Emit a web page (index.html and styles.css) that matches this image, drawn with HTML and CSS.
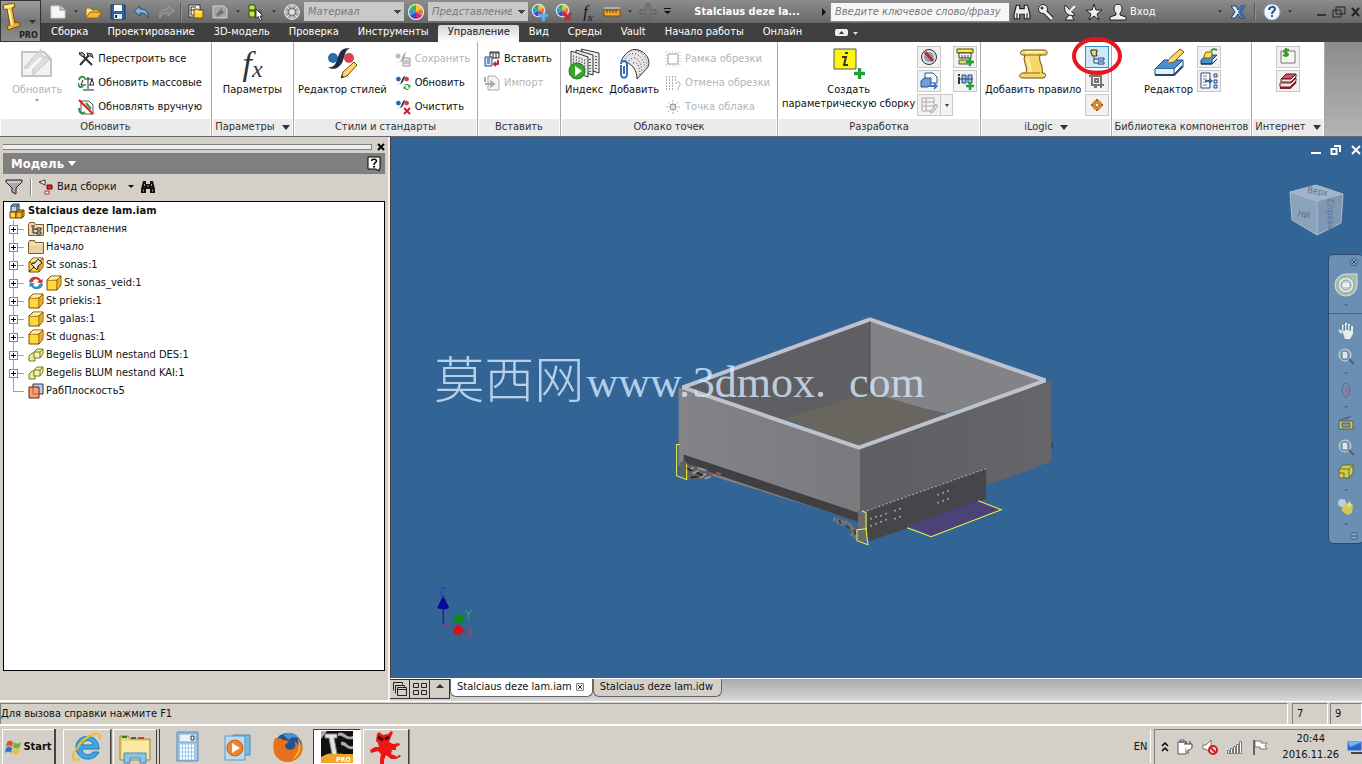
FILE: index.html
```html
<!DOCTYPE html>
<html lang="ru">
<head>
<meta charset="utf-8">
<title>Stalciaus deze lam.iam</title>
<link rel="stylesheet" href="styles.css">
</head>
<body>
<svg class="defs" width="0" height="0" aria-hidden="true">
  <defs>
    <linearGradient id="gold" x1="0" y1="0" x2="1" y2="1"><stop offset="0" stop-color="#ffe27a"/><stop offset="1" stop-color="#e09a1c"/></linearGradient>
    <linearGradient id="faceL" x1="0" y1="0" x2="1" y2="0"><stop offset="0" stop-color="#848388"/><stop offset="1" stop-color="#7a797e"/></linearGradient>
    <linearGradient id="faceR" x1="0" y1="0" x2="1" y2="0"><stop offset="0" stop-color="#5d5d62"/><stop offset="1" stop-color="#66656a"/></linearGradient>
    <symbol id="cube" viewBox="0 0 16 16"><path d="M1 5l4-4h10v9l-4 5H1z" fill="#ffd24a" stroke="#7a4a00"/><path d="M1 5h10v10M11 5l4-4" fill="none" stroke="#7a4a00"/><path d="M2 5l3.500-3.500h8.500L10.500 4.500z" fill="#fff0a8"/><path d="M2 6h8v8H2z" fill="#ffd83a"/><path d="M11.500 5.500L14.500 2.500v7L11.500 13.500z" fill="#f0a820"/></symbol>
    <symbol id="slide" viewBox="0 0 16 16"><path d="M1 9l3-3h3v8H1z" fill="#e4ec9a" stroke="#707a2a"/><path d="M6 5l3-3h6v5l-3 4H6z" fill="#f2f6a8" stroke="#707a2a"/><path d="M6 5h6v6M12 5l3-3" fill="none" stroke="#707a2a"/></symbol>
    <symbol id="folder" viewBox="0 0 16 16"><path d="M.5 3.500l1-2h5l1 2h8v11H.5z" fill="#ecd0a0" stroke="#7c5a34"/><path d="M1.500 5h13" stroke="#fff0d0"/></symbol>
    <symbol id="wheel" viewBox="0 0 18 18"><circle cx="9" cy="9" r="8" fill="#eee"/><path d="M9 9L9 2A7 7 0 0 1 15 5.500z" fill="#f6c62e"/><path d="M9 9L15 5.500A7 7 0 0 1 15 12.500z" fill="#ef7a24"/><path d="M9 9L15 12.500A7 7 0 0 1 9 16z" fill="#c62d8a"/><path d="M9 9L9 16A7 7 0 0 1 3 12.500z" fill="#4a3fc0"/><path d="M9 9L3 12.500A7 7 0 0 1 3 5.500z" fill="#2a9ae0"/><path d="M9 9L3 5.500A7 7 0 0 1 9 2z" fill="#3cb43c"/><circle cx="9" cy="9" r="7.500" fill="none" stroke="#ddd"/></symbol>
    <symbol id="styles" viewBox="0 0 16 16"><circle cx="3" cy="5" r="3" fill="#2a6aa8"/><circle cx="13" cy="5" r="3" fill="#d83a48"/><path d="M1 11c8 2 4-9 11-10-4 3 0 11-11 10z" fill="#223048"/></symbol>
    <symbol id="sync" viewBox="0 0 16 16"><path d="M2 6c2-5 9-5 11-1l2-2v6H9l2-2C10 4 6 3 2 6z" fill="#2a9a3a"/><path d="M14 10c-2 5-9 5-11 1l-2 2V7h6L5 9c1 3 5 4 9 1z" fill="#2a9a3a"/></symbol>
    <symbol id="mag" viewBox="0 0 18 18"><circle cx="8" cy="8" r="6" fill="#8fa9c0" stroke="#c4d4e0"/><path d="M5 4h4l2 2v6H5z" fill="#dde6ec" stroke="#5a7084"/><path d="M12 12l5 5" stroke="#4c6078" stroke-width="2"/></symbol>
    <symbol id="plus" viewBox="0 0 10 10"><path d="M3.500 0h3v3.500H10v3H6.500V10h-3V6.500H0v-3h3.500z" fill="#21a038"/></symbol>
    <symbol id="binoc" viewBox="0 0 16 16"><path d="M3 2h3v3h4V2h3l2 8v4h-5v-4H6v4H1v-4z" fill="currentColor"/><path d="M3.500 10.500v2M12.500 10.500v2M4.500 5v2M11.500 5v2M8 6v2" stroke="#999"/></symbol>
  </defs>
</svg>

<header class="top">
  <button class="app" aria-label="Меню приложения"><svg width="36" height="36" viewBox="0 0 36 36"><path d="M2 2l11-2 1 4-3 1 3 15 4-1 1 4-12 4-1-4 3-1L6 6 3 7z" fill="url(#gold)" stroke="#7a4d08"/><path d="M4 4l7-1M8 7l3 15" stroke="#fff1a8" stroke-width="2"/><path d="M28 17h7l-3.500 4z" fill="#333"/></svg><span>PRO</span></button>
  <div class="bars">
    <div class="title">
      <button class="tb" aria-label="Создать"><svg width="18" height="16" viewBox="0 0 18 16"><path d="M2 2h9l5 4v8H2z" fill="#f5f5f5" stroke="#ccc"/><path d="M11 2v4h5" fill="#ccc" stroke="#888"/></svg></button><i class="dd"></i>
      <button class="tb" aria-label="Открыть"><svg width="18" height="16" viewBox="0 0 18 16"><path d="M1 14V4h5l1 2h7v2" fill="#ffe48a" stroke="#8a6410"/><path d="M1 14l4-6h12l-4 6z" fill="#f7b733" stroke="#8a6410"/></svg></button>
      <button class="tb" aria-label="Сохранить"><svg width="16" height="16" viewBox="0 0 16 16"><path d="M1 1h14v14H1z" fill="#2d62a8" stroke="#17365f"/><path d="M4 1h8v6H4z" fill="#fff"/><path d="M4 10h8v5H4z" fill="#dfe6ee"/><path d="M5 11h2v3H5z" fill="#17365f"/></svg></button>
      <button class="tb" aria-label="Отменить"><svg width="18" height="16" viewBox="0 0 18 16"><path d="M1 7l6-5v3c6 0 9 3 8 9-1-4-4-5-8-5v3z" fill="#7fb0dc" stroke="#27507c"/></svg></button>
      <button class="tb" aria-label="Повторить"><svg width="18" height="16" viewBox="0 0 18 16"><path d="M17 7l-6-5v3c-6 0-9 3-8 9 1-4 4-5 8-5v3z" fill="#838383" stroke="#a2a2a2"/></svg></button>
      <i class="sep"></i>
      <button class="tb" aria-label="Браузер"><svg width="16" height="16" viewBox="0 0 16 16"><path d="M1 1h11v12H1z" fill="#fff" stroke="#334"/><path d="M3 3h5M3 3v8h3M3 6h4" fill="none" stroke="#222"/><path d="M6 5h4l1 1h4v8H6z" fill="#ffd23a" stroke="#6a4a00"/><path d="M7 8h7" stroke="#fff0a0"/></svg></button>
      <button class="tb" aria-label="Обновить"><svg width="18" height="16" viewBox="0 0 18 16"><path d="M2 2h11l3 3v9H2z" fill="#a5a5a5" stroke="#d0d0d0"/><path d="M4 12l7-8v3l3 1-8 5v-2z" fill="#707070"/></svg></button><i class="dd"></i>
      <button class="tb" aria-label="Выбор"><svg width="18" height="18" viewBox="0 0 18 18"><path d="M2 2h6v5H2zM2 8h6v6H2z" fill="#c8ea30" stroke="#33501a"/><path d="M9 8h5v6H9z" fill="#5bb030" stroke="#33501a"/><path d="M9 6l7 7h-3l2 4-2 .5-2-4-2 2z" fill="#fff" stroke="#234"/></svg></button><i class="dd"></i>
      <button class="tb" aria-label="Материалы"><svg width="18" height="18" viewBox="0 0 18 18"><circle cx="9" cy="9" r="7.500" fill="#aaa" stroke="#ddd"/><path d="M9 2v14M2 9h14M4 4l10 10M14 4L4 14" stroke="#eee"/><circle cx="9" cy="9" r="4" fill="none" stroke="#666"/></svg></button>
      <select class="combo" aria-label="Материал"><option>Материал</option></select>
      <button class="tb" aria-label="Цвет"><svg width="18" height="18"><use href="#wheel"/></svg></button>
      <select class="combo" aria-label="Представление"><option>Представление</option></select>
      <button class="tb" aria-label="Настроить вид"><svg width="18" height="18" viewBox="0 0 18 18"><use href="#wheel" width="15" height="15"/><path d="M7 11h10v2l-3 2v3h-3v-3l-4-2z" fill="#58b4ee"/></svg></button>
      <button class="tb" aria-label="Очистить вид"><svg width="18" height="18" viewBox="0 0 18 18"><use href="#wheel" width="15" height="15"/><path d="M8 10l8 7M16 10l-6 7" stroke="#b8323c" stroke-width="3"/></svg></button>
      <button class="tb fx" aria-label="Параметры"><i>f<sub>x</sub></i></button>
      <button class="tb" aria-label="Измерить"><svg width="18" height="16" viewBox="0 0 18 16"><path d="M1 6h16v6H1z" fill="#f3a92c" stroke="#7a5208"/><path d="M4 6v3M7 6v3M10 6v3M13 6v3" stroke="#5a3a00"/><path d="M1 4h16" stroke="#ddd"/></svg></button><i class="dd"></i>
      <button class="tb" aria-label="Добавить"><svg width="18" height="18" viewBox="0 0 18 18"><path d="M7 1h4v6h6v4h-6v6H7v-6H1V7h6z" fill="#767676" stroke="#606060"/></svg></button>
      <button class="tb narrow" aria-label="Настройка панели"><svg width="10" height="8" viewBox="0 0 10 8"><path d="M1 0h7v1H1zM1 3h7L4.500 6z" fill="#111"/></svg></button>
      <strong class="docname">Stalciaus deze la...</strong>
      <svg width="12" height="10" viewBox="0 0 12 10"><path d="M4 1v8l4-4z" fill="#111"/></svg>
      <input class="search" type="text" placeholder="Введите ключевое слово/фразу" aria-label="Поиск">
      <button class="tb" aria-label="Найти"><svg width="18" height="18" viewBox="0 0 16 16"><path d="M3 2h3v3h4V2h3l2 8v4h-5v-4H6v4H1v-4z" fill="#eee" stroke="#222"/><path d="M3.500 9v5M12.500 9v5" stroke="#222"/></svg></button>
      <button class="tb" aria-label="Ключ"><svg width="18" height="18" viewBox="0 0 18 18"><path d="M7 8l8 8" stroke="#222" stroke-width="5"/><circle cx="6" cy="6" r="4.500" fill="#eee" stroke="#222"/><path d="M7 8l8 8" stroke="#eee" stroke-width="3"/><circle cx="5" cy="5" r="1.500" fill="#333"/></svg></button>
      <button class="tb" aria-label="Связь"><svg width="18" height="18" viewBox="0 0 18 18"><path d="M4 2c-2 8 4 12 10 10zM8 12l-4 5h9l-2-4M9 8l5-6" fill="#eee" stroke="#222"/><path d="M9 8l5-5" stroke="#fff" stroke-width="2"/></svg></button>
      <button class="tb" aria-label="Избранное"><svg width="18" height="18" viewBox="0 0 18 18"><path d="M9 1l2 6h6l-5 4 2 6-5-4-5 4 2-6-5-4h6z" fill="#eee" stroke="#222"/></svg></button>
      <button class="tb" aria-label="Пользователь"><svg width="18" height="18" viewBox="0 0 18 18"><path d="M5 5c0-5 8-5 8 0 0 3-1 4-2 5v2l6 2v3H1v-3l6-2v-2C6 9 5 8 5 5z" fill="#eee" stroke="#222"/></svg></button>
      <span class="login">Вход</span>
      <span class="grow"></span><i class="dd"></i>
      <button class="tb" aria-label="Exchange"><svg width="18" height="16" viewBox="0 0 18 16"><path d="M2 2h5l2 4 3-4h4l-4 6 4 6h-5l-2-4-3 4H2l4-6z" fill="#dce8f6" stroke="#1c3a70"/><path d="M12 2h4l-4 6 4 6h-4L9 8z" fill="#3c6cb4"/></svg></button>
      <i class="sep wide"></i>
      <button class="tb" aria-label="Справка"><svg width="18" height="18" viewBox="0 0 18 18"><circle cx="9" cy="9" r="8" fill="#f4f8ff" stroke="#9ab"/><path d="M6 7c0-4 6-4 6-1 0 2-3 2-3 5" fill="none" stroke="#1b4fa0" stroke-width="2"/><path d="M8 12h2v2H8z" fill="#1b4fa0"/></svg></button><i class="dd"></i>
      <div class="win">
        <button aria-label="Свернуть"><svg width="12" height="12" viewBox="0 0 12 12"><path d="M1 8h9v2H1z" fill="#333"/></svg></button>
        <button aria-label="Восстановить"><svg width="14" height="12" viewBox="0 0 14 12"><path d="M4 1h9v7H4zM1 4h8v7H1z" fill="#777" stroke="#222"/></svg></button>
        <button aria-label="Закрыть"><svg width="12" height="12" viewBox="0 0 12 12"><path d="M2 2l7 8M9 2l-7 8" stroke="#222" stroke-width="2"/></svg></button>
      </div>
    </div>
    <nav class="tabs">
      <a href="#">Сборка</a><a href="#">Проектирование</a><a href="#">3D-модель</a><a href="#">Проверка</a><a href="#">Инструменты</a><a href="#" class="on">Управление</a><a href="#">Вид</a><a href="#">Среды</a><a href="#">Vault</a><a href="#">Начало работы</a><a href="#">Онлайн</a>
      <button class="fold" aria-label="Свернуть ленту"><svg width="24" height="10" viewBox="0 0 24 10"><rect y="1" width="13" height="7" rx="2" fill="#eee"/><path d="M4 6l2.500-3L9 6z" fill="#333"/><path d="M18 4h5l-2.500 3z" fill="#ddd"/></svg></button>
    </nav>
  </div>
</header>

<section class="ribbon">
  <div class="panel p-upd">
    <div class="body">
      <button class="big off"><svg width="32" height="32" viewBox="0 0 32 32"><path d="M1 4h22l7 7v17H1z" fill="#f2f2f2" stroke="#c4c4c4" stroke-width="2"/><path d="M3 20L20 1v6l9 4L12 27v-7z" fill="#dedede" stroke="#c4c4c4"/><path d="M6 24L20 10" stroke="#f8f8f8" stroke-width="3"/></svg><span>Обновить</span><i class="dd"></i></button>
      <div class="col">
        <button class="row"><svg width="16" height="16" viewBox="0 0 16 16"><path d="M2 14L11 4M14 14L5 5" stroke="#333" stroke-width="2"/><path d="M1 3l3-2 3 3-2 2zM9 2l5 1 1 4-2-2-3 0zM1 1l2 2" fill="#999" stroke="#333"/></svg>Перестроить все</button>
        <button class="row"><svg width="16" height="16" viewBox="0 0 16 16"><path d="M10 2v12M5 15h11M6 4h9M3 10h5M11 10h5M5 5l-2 5M14 4l-2 6M14 4l2 6" stroke="#223" fill="none"/><path d="M1 5c1-4 4-4 6-2M0 8c0 4 3 5 5 3" fill="none" stroke="#2a9a3a" stroke-width="2"/></svg>Обновить массовые</button>
        <button class="row"><svg width="16" height="16" viewBox="0 0 16 16"><path d="M3 2h8l4 4v9H3z" fill="#fff" stroke="#555"/><path d="M8 4l5 6M1 9c0 5 3 6 6 4" fill="none" stroke="#2a9a3a" stroke-width="2"/><path d="M1 1l14 14" stroke="#d02030" stroke-width="2"/></svg>Обновлять вручную</button>
      </div>
    </div>
    <h2>Обновить</h2>
  </div>
  <div class="panel p-par">
    <div class="body center">
      <button class="big"><span class="bigfx"><i>f<sub>x</sub></i></span><span>Параметры</span></button>
    </div>
    <h2>Параметры <i class="tri"></i></h2>
  </div>
  <div class="panel p-sty">
    <div class="body">
      <button class="big"><svg width="32" height="32" viewBox="0 0 32 32"><circle cx="7" cy="10" r="5" fill="#2b6da8"/><circle cx="23" cy="10" r="5" fill="#dc4450"/><path d="M2 19c7 1 8-4 10-10 2-6 4-9 12-9-6 3-5 9-8 15-3 5-9 8-14 4z" fill="#1e2c44"/><path d="M15 30l2-6L28 14l3 3L21 28z" fill="#ffd868" stroke="#6a4a10"/><path d="M15 30l1-3 2 2z" fill="#333"/></svg><span>Редактор стилей</span></button>
      <div class="col">
        <button class="row off"><svg width="16" height="16" viewBox="0 0 16 16"><circle cx="3" cy="5" r="2.500" fill="#bbb"/><path d="M1 11c8 2 4-9 11-10-4 3 0 11-11 10z" fill="#aaa"/><path d="M8 7h7v8H8zM9 10h5M9 12h5" fill="#eee" stroke="#999"/></svg>Сохранить</button>
        <button class="row"><svg width="16" height="16" viewBox="0 0 16 16"><use href="#styles" width="15" height="13"/><use href="#sync" x="8" y="8" width="8" height="8"/></svg>Обновить</button>
        <button class="row"><svg width="16" height="16" viewBox="0 0 16 16"><use href="#styles" width="15" height="13"/><path d="M9 9l6 6M15 9l-6 6" stroke="#d01c2c" stroke-width="2"/></svg>Очистить</button>
      </div>
    </div>
    <h2>Стили и стандарты</h2>
  </div>
  <div class="panel p-ins">
    <div class="body">
      <div class="col">
        <button class="row"><svg width="16" height="16" viewBox="0 0 16 16"><path d="M6 1h9v6H6z" fill="#fff" stroke="#222"/><path d="M6 2h9M9 3v4M12 3v4" stroke="#222"/><path d="M1 6h7v9H1z" fill="#d4e6fa" stroke="#1f4a80"/><path d="M3 8h3M3 10h3M3 12h3" stroke="#1f4a80"/><path d="M14 9v4h-4M12 11l-2 2 2 2" fill="none" stroke="#c02838" stroke-width="2"/></svg>Вставить</button>
        <button class="row off"><svg width="16" height="16" viewBox="0 0 16 16"><path d="M4 1h7l4 4v10H4z" fill="#f4f4f4" stroke="#aaa"/><path d="M1 9h8M6 6l4 3-4 3M1 2v5" fill="none" stroke="#aaa" stroke-width="2"/></svg>Импорт</button>
      </div>
    </div>
    <h2>Вставить</h2>
  </div>
  <div class="panel p-cld">
    <div class="body">
      <button class="big"><svg width="32" height="32" viewBox="0 0 32 32"><g fill="#ececec" stroke="#333"><path d="M13 1l18 4v20l-6-2z"/><path d="M8 2l17 5v20L8 22z"/><path d="M3 3l17 6v20L3 23z"/></g><path d="M5 8l14 5M5 11l14 5M5 14l14 5M5 17l14 5M22 11v13M28 8v13" stroke="#555" stroke-dasharray="1 2" stroke-width="2"/><circle cx="9" cy="23" r="8" fill="#3aa62a" stroke="#1e7a18"/><path d="M7 18v10l7-5z" fill="#fff"/></svg><span>Индекс</span></button>
      <button class="big"><svg width="32" height="32" viewBox="0 0 32 32"><path d="M3 13C8 3 15-1 23 3c8 4 9 12 7 16L19 31c0-9-5-17-16-18z" fill="#e6e6e6" stroke="#333"/><path d="M7 11C12 2 25 4 27 20M11 13C17 5 24 14 24 24M15 15c5-2 7 6 7 12M17 2c8 2 12 8 12 16" fill="none" stroke="#444" stroke-dasharray="1 2"/><path d="M3 17v9c0 5 6 5 6 0V16c0-4-6-4-6 0M6 18v8" fill="none" stroke="#3b72b0" stroke-width="2"/></svg><span>Добавить</span></button>
      <div class="col">
        <button class="row off"><svg width="16" height="16" viewBox="0 0 16 16"><path d="M3 3h10v10H3z" fill="none" stroke="#999"/><path d="M1 1h14M1 15h14M1 1v14M15 1v14" stroke="#bbb" stroke-dasharray="1 2"/></svg>Рамка обрезки</button>
        <button class="row off"><svg width="16" height="16" viewBox="0 0 16 16"><path d="M1 2h11M1 5h11M1 8h9M1 11h9M1 14h9" stroke="#aaa" stroke-dasharray="1 2" stroke-width="2"/><path d="M11 9c0-3 4-3 4 0s-2 2-2 6" fill="none" stroke="#aaa"/></svg>Отмена обрезки</button>
        <button class="row off"><svg width="16" height="16" viewBox="0 0 16 16"><path d="M8 1v14M1 8h14M3 3l10 10M13 3L3 13" stroke="#aaa" stroke-dasharray="2 1"/><circle cx="8" cy="8" r="3" fill="#ddd" stroke="#999"/></svg>Точка облака</button>
      </div>
    </div>
    <h2>Облако точек</h2>
  </div>
  <div class="panel p-dev">
    <div class="body">
      <button class="big"><svg width="32" height="32" viewBox="0 0 32 32"><path d="M1 1h22v20H1z" fill="#fff312" stroke="#555"/><path d="M12 4h3v2h-3z" fill="#333"/><path d="M9 9h4l-2 8h4" fill="none" stroke="#333" stroke-width="2"/><use href="#plus" x="21" y="20" width="11" height="11"/></svg><span>Создать</span><span>параметрическую сборку</span></button>
      <div class="boxes">
        <button class="box" aria-label="Анализ"><svg width="18" height="18" viewBox="0 0 18 18"><circle cx="9" cy="9" r="7.500" fill="#dde3ea" stroke="#333"/><circle cx="9" cy="9" r="5" fill="#90a0b0"/><path d="M5 4l8 9" stroke="#b43022" stroke-width="3"/></svg></button>
        <button class="box" aria-label="Компонент iPart"><svg width="18" height="18" viewBox="0 0 18 18"><path d="M5 1h8l4 4v6H5z" fill="#fff" stroke="#2c5590"/><path d="M1 9l3-3h7v6l-3 3H1z" fill="#6f9fd8" stroke="#2c5590"/><path d="M9 13h5v-3l4 4-4 4v-3H9z" fill="#3b78c4"/></svg></button>
        <div class="split"><button class="box" aria-label="Таблица" disabled><svg width="18" height="18" viewBox="0 0 18 18"><path d="M2 2h12v13H2zM2 6h12M2 10h12M6 2v13" fill="#f4f4f4" stroke="#aaa"/><path d="M10 16l6-8 2 2-6 7z" fill="#ddd" stroke="#aaa"/></svg></button><button class="box slim" aria-label="Ещё"><i class="dd"></i></button></div>
      </div>
      <div class="boxes">
        <button class="box" aria-label="Штамп"><svg width="18" height="18" viewBox="0 0 18 18"><path d="M1 1h16v4H1z" fill="#ffe93a" stroke="#4a4a10"/><path d="M3 5h12v5H3z" fill="#fff" stroke="#333"/><path d="M6 7v3M9 7v3M12 7v3" stroke="#333"/><path d="M3 12h12v4H3z" fill="#d8e060" stroke="#555"/><use href="#plus" x="10" y="10" width="8" height="8"/></svg></button>
        <button class="box" aria-label="iMate"><svg width="18" height="18" viewBox="0 0 18 18"><path d="M2 2h2v2H2zM2 5h2v7H2z" fill="#333"/><path d="M6 3h4v8H6zM12 3h4v8h-4zM4 7h13" fill="#9cc0ec" stroke="#24487c"/><use href="#plus" x="10" y="10" width="8" height="8"/></svg></button>
      </div>
    </div>
    <h2>Разработка</h2>
  </div>
  <div class="panel p-log">
    <div class="body">
      <button class="big"><svg width="32" height="32" viewBox="0 0 32 32"><path d="M7 2h20c4 0 4 5 1 5h-5c-2 7 4 11 2 18h1c4 0 3 5 0 5H6c-5 0-4-5 0-5h3c2-7-4-12-1-18H6C2 7 3 2 7 2z" fill="#f7d768" stroke="#6b4c0c"/><path d="M8 7h16M9 25h14" stroke="#8c6818"/><path d="M8 4h18" stroke="#fff0a8" stroke-width="2"/><path d="M11 9c-1 5 3 9 2 15" stroke="#fff0a0" stroke-width="3" fill="none"/></svg><span>Добавить правило</span></button>
      <div class="boxes ring-host">
        <button class="box active" aria-label="Обозреватель правил"><svg width="18" height="18" viewBox="0 0 18 18"><path d="M3 2h6v2l-1 1 1 3H4V6L3 5z" fill="#f7d860" stroke="#222"/><path d="M6 9v6h3M6 11h3M10 10h6v2h-6zM10 14h6v2h-6z" fill="#fff" stroke="#1c3c78"/></svg></button>
        <button class="box" aria-label="Триггеры"><svg width="18" height="18" viewBox="0 0 18 18"><path d="M4 1v12h12M1 4h12v12M7 7h3v3H7zM6 15h3" fill="none" stroke="#777" stroke-width="2"/></svg></button>
        <button class="box" aria-label="Параметры iLogic"><svg width="18" height="18" viewBox="0 0 18 18"><path d="M9 3v12M3 9h12" stroke="#a85a10" stroke-width="2"/><circle cx="9" cy="9" r="4.500" fill="#f09a2c" stroke="#a85a10"/><circle cx="9" cy="9" r="2" fill="#fff" stroke="#a85a10"/></svg></button>
        <svg class="ring" width="52" height="40" viewBox="0 0 52 40"><ellipse cx="26" cy="20" rx="23" ry="17" fill="none" stroke="#e8141e" stroke-width="4"/></svg>
      </div>
    </div>
    <h2>iLogic <i class="tri"></i></h2>
  </div>
  <div class="panel p-lib">
    <div class="body">
      <button class="big"><svg width="32" height="32" viewBox="0 0 32 32"><path d="M2 21l9-9h19l-9 9z" fill="#4a8fd0" stroke="#1c4a7c"/><path d="M2 21v6h19v-6M21 27l9-9v-6" fill="#e9eff4" stroke="#1c4a7c"/><path d="M2 27h19l9-9" fill="none" stroke="#1c4a7c" stroke-width="2"/><path d="M15 15l2-5L27 1l4 3-10 10z" fill="#ffd45a" stroke="#7a5410"/><path d="M15 15l2-5 3 3z" fill="#f4e0c0"/></svg><span>Редактор</span></button>
      <div class="boxes">
        <button class="box" aria-label="Обновить библиотеку"><svg width="18" height="18" viewBox="0 0 18 18"><path d="M1 12l5-5h11l-5 5v4H1z" fill="#4a8fd0" stroke="#1c4a7c"/><path d="M4 8l2-4h6v4l-2 2H4z" fill="#ffe23a" stroke="#7a5c00"/><path d="M11 3c2-3 4-2 6-1" stroke="#2a9a3a" fill="none" stroke-width="2"/><path d="M1 16h11l5-5" stroke="#222" fill="none"/></svg></button>
        <button class="box" aria-label="Пакетная публикация"><svg width="18" height="18" viewBox="0 0 18 18"><path d="M1 1h9v15H1z" fill="#fff" stroke="#244a80"/><path d="M3 4h4M3 7h4M3 10h4M3 13h4" stroke="#777"/><path d="M5 8h4V6l4 3-4 3v-2H5z" fill="#2a68b0"/><path d="M14 2h3v3h-3zM14 8h3v3h-3zM14 13h3v3h-3z" fill="#cfe0f4" stroke="#244a80"/></svg></button>
      </div>
    </div>
    <h2>Библиотека компонентов</h2>
  </div>
  <div class="panel p-web">
    <div class="body center">
      <div class="boxes">
        <button class="box" aria-label="Поставщики"><svg width="18" height="18" viewBox="0 0 18 18"><path d="M2 3h14v12H2z" fill="#f6f8f0" stroke="#777"/><path d="M10 2c-5-2-6 3-3 3s3 4-3 2M7 0v9" fill="none" stroke="#3c9a20" stroke-width="2"/></svg></button>
        <button class="box" aria-label="Каталог"><svg width="18" height="18" viewBox="0 0 18 18"><path d="M2 7l5-5h10l-5 5z" fill="#d8505c" stroke="#5c1620"/><path d="M2 7v3h10l5-5V2l-5 5z" fill="#f2e8dc" stroke="#5c1620"/><path d="M1 11v4h10l6-6V6l-5 5z" fill="#f2e8dc" stroke="#6c2430"/><path d="M1 16h10l6-6" fill="none" stroke="#8c1c2c" stroke-width="2"/></svg></button>
      </div>
    </div>
    <h2>Интернет <i class="tri"></i></h2>
  </div>
</section>

<main class="work">
  <aside class="browser">
    <div class="grip"><i></i><button aria-label="Закрыть панель"><svg width="8" height="8" viewBox="0 0 8 8"><path d="M1 1l6 6M7 1L1 7" stroke="#000" stroke-width="2"/></svg></button></div>
    <div class="caption"><span>Модель</span><i class="tri white"></i><button class="help" aria-label="Справка"><svg width="14" height="16" viewBox="0 0 14 16"><path d="M1 1h12v12h-1v2l-3-2H1z" fill="#fff" stroke="#000"/><path d="M4.500 5c0-2.500 5-2.500 5 0 0 1.500-2.500 1.500-2.500 4" fill="none" stroke="#000" stroke-width="1.500"/><path d="M6 10h2v1.500H6z"/></svg></button></div>
    <div class="tools">
      <button aria-label="Фильтр"><svg width="18" height="16" viewBox="0 0 18 16"><path d="M1 1h16v2l-6 6v6l-4-2V9L1 3z" fill="#aaa" stroke="#222"/><path d="M2 3h14" stroke="#eee"/></svg></button>
      <i class="vsep"></i>
      <button class="view"><svg width="16" height="16" viewBox="0 0 16 16"><path d="M1 3l6-2v5z" fill="#fff" stroke="#333"/><path d="M9 6h5v4H9z" fill="#d8303c" stroke="#600"/><path d="M7 12h4v3H7z" fill="#fff" stroke="#c02030"/></svg>Вид сборки <i class="arrow"></i></button>
      <button aria-label="Найти"><svg width="16" height="16"><use href="#binoc"/></svg></button>
    </div>
    <ul class="tree">
      <li class="root"><svg width="16" height="16" viewBox="0 0 16 16"><path d="M2 3l2-2h6v6l-2 2H2z" fill="#b8d4f0" stroke="#1c2c44"/><path d="M2 3h6v6M8 3l2-2" fill="none" stroke="#1c2c44"/><path d="M1 9h6v6H1z" fill="#ffd840" stroke="#5a3a00"/><path d="M7 9l2-2h6v6l-2 2H7z" fill="#f7b828" stroke="#5a3a00"/><path d="M7 9h6v6M13 9l2-2" fill="none" stroke="#5a3a00"/></svg>Stalciaus deze lam.iam</li>
      <li><b></b><svg width="16" height="16" viewBox="0 0 16 16"><use href="#folder"/><path d="M5 5v7h4M5 8h4M3 5h4" fill="none" stroke="#222"/><path d="M9 7h4v2H9zM9 11h4v2H9z" fill="#fff" stroke="#222"/></svg>Представления</li>
      <li><b></b><svg width="16" height="16"><use href="#folder"/></svg>Начало</li>
      <li><b></b><svg width="16" height="16" viewBox="0 0 16 16"><use href="#cube"/><path d="M1 15l5-5-3-3 4-1 3-4 4 4-4 3-1 4-3-3" fill="#e8e8e8" stroke="#222"/></svg>St sonas:1</li>
      <li><b></b><svg width="16" height="16" viewBox="0 0 16 16"><path d="M1 7c1-6 9-7 12-2l2-1-1 5-5-2 2-1C9 3 5 4 5 7z" fill="#d4303c"/><path d="M15 9c-1 6-9 7-12 2l-2 1 1-5 5 2-2 1c2 3 6 2 6-1z" fill="#2f8fb8"/></svg><svg width="16" height="16"><use href="#cube"/></svg>St sonas_veid:1</li>
      <li><b></b><svg width="16" height="16"><use href="#cube"/></svg>St priekis:1</li>
      <li><b></b><svg width="16" height="16"><use href="#cube"/></svg>St galas:1</li>
      <li><b></b><svg width="16" height="16"><use href="#cube"/></svg>St dugnas:1</li>
      <li><b></b><svg width="16" height="16"><use href="#slide"/></svg>Begelis BLUM nestand DES:1</li>
      <li><b></b><svg width="16" height="16"><use href="#slide"/></svg>Begelis BLUM nestand KAI:1</li>
      <li class="last"><svg width="16" height="16" viewBox="0 0 16 16"><path d="M5 1h10v10H5z" fill="#b8d0f0" stroke="#333"/><path d="M1 4h10v11H1z" fill="#f4a070" stroke="#5a2410"/><path d="M5 4v7h6" fill="none" stroke="#c85030"/></svg>РабПлоскость5</li>
    </ul>
  </aside>

  <section class="stage">
    <div class="view3d">
      <svg class="scene" viewBox="390 138 971 540" preserveAspectRatio="xMidYMid slice">
        <path d="M685 390L869 322V410L784 420 800 432z" fill="#5f5e63"/>
        <path d="M869 322L1043 381 945 414 869 397z" fill="#838287"/>
        <path d="M783 419l86-26 75 22-86 33z" fill="#69655f"/>
        <path d="M678 388L859 450V522L678 466z" fill="url(#faceL)"/>
        <path d="M859 450L1050 381V462L985 486 859 515z" fill="url(#faceR)"/>
        <path d="M683 455l174 58v9L683 464z" fill="#403f42"/>
        <path d="M682 388L869 320l175 61-186 67z" fill="none" stroke="#bfc2ca" stroke-width="4" stroke-linejoin="bevel"/>
        <path d="M869 322v71" stroke="#4e4d52"/>
        <path d="M866 511L985 469v30l-62 24-57 19z" fill="#46464a"/>
        <path d="M866 511L985 469" stroke="#b0b0b4" stroke-dasharray="2 2"/>
        <path d="M906 526l71-25 23 9-70 26z" fill="#4b4378"/>
        <path d="M977 501l23 9-70 27-24-9" fill="none" stroke="#f4f43c"/>
        <path d="M857 511h9v31h-9z" fill="#6b6a6c"/>
        <path d="M679 463l6-2 3 4 5 1 6 2 8 2 3 6-10 4-8-1-7 2-5-4z" fill="#606064"/>
        <path d="M688 470l5-2M692 474l6-3M700 478l5-4M697 468l8 3M704 479l6-2" stroke="#999" stroke-width="2"/>
        <path d="M685 468l6 3M696 473l6 3M690 478l7-1" stroke="#222" stroke-width="2"/>
        <path d="M708 474l4 1M715 474l5 1" stroke="#7a5f58" stroke-width="4"/>
        <path d="M832 519l14 4 6 6M836 522l8 3M848 527l9 6M850 534l6 4" stroke="#77757a" stroke-width="4" stroke-dasharray="3 1" fill="none"/>
        <path d="M838 520l2 4M846 526l3 3M853 530l2 5" stroke="#4b3a35" stroke-width="2"/>
        <path d="M679 445h-3v31l10 4v-15" fill="none" stroke="#f4f43c"/>
        <path d="M861 511l4 2v16l2 16-11-4v-11l10-1" fill="none" stroke="#f4f43c"/>
        <g fill="#a4a4a8"><circle cx="870" cy="519" r="1"/><circle cx="875" cy="517" r="1"/><circle cx="880" cy="516" r="1"/><circle cx="885" cy="514" r="1"/><circle cx="870" cy="526" r="1"/><circle cx="875" cy="524" r="1"/><circle cx="880" cy="522" r="1"/><circle cx="885" cy="520" r="1"/><circle cx="894" cy="511" r="1"/><circle cx="899" cy="509" r="1"/><circle cx="894" cy="519" r="1"/><circle cx="899" cy="517" r="1"/><circle cx="937" cy="495" r="1"/><circle cx="942" cy="493" r="1"/><circle cx="947" cy="491" r="1"/><circle cx="937" cy="503" r="1"/><circle cx="942" cy="501" r="1"/><circle cx="947" cy="499" r="1"/></g>
        <path d="M1051 443v6" stroke="#333"/>
        <text class="mark" x="434" y="399">莫西网</text>
        <text class="mark-lat" x="586" y="398">www.</text><text class="mark-lat" x="692" y="398">3dmox.</text><text class="mark-lat" x="848" y="398">com</text>
        <path d="M443 606v18" stroke="#101080"/><path d="M443 624l12 4" stroke="#a03050"/>
        <path d="M443 596l6 12c-3 2-9 2-12 0z" fill="#0a0a98"/>
        <path d="M453 617l6-3 5 2v5l-6 3-4-3z" fill="#0c8c14"/>
        <path d="M459 624l5 7-5 4-6-1 1-6z" fill="#d41018"/>
        <text class="axis" x="438" y="596" fill="#2040e0">Z</text><text class="axis" x="465" y="619" fill="#20b070">Y</text><text class="axis" x="465" y="637" fill="#a83c5c">X</text>
      </svg>
      <div class="docwin">
        <button aria-label="Свернуть"><svg width="12" height="12" viewBox="0 0 12 12"><path d="M1 8h10v2H1z" fill="#fff"/></svg></button>
        <button aria-label="Восстановить"><svg width="12" height="12" viewBox="0 0 12 12"><path d="M4 2h6v6M1.500 5h5v5h-5z" fill="none" stroke="#fff" stroke-width="2"/></svg></button>
        <button aria-label="Закрыть"><svg width="12" height="12" viewBox="0 0 12 12"><path d="M2 2l8 8M10 2l-8 8" stroke="#fff" stroke-width="2"/></svg></button>
      </div>
      <svg class="viewcube" width="56" height="56" viewBox="0 0 56 56"><path d="M1 10L27 3l27 9-26 7z" fill="#a3b4c8"/><path d="M1 10l27 9v34L3 38z" fill="#8ba2bb"/><path d="M28 19l26-7-2 29-24 12z" fill="#7e98b4"/><path d="M1 10L27 3l27 9-2 29-24 12L3 38zM1 10l27 9 26-7M28 19v34" fill="none" stroke="#a9bbce"/><text class="cube-t" transform="translate(8 34) rotate(14)">НИ</text><text class="cube-t" transform="translate(38 17) rotate(88)">Справа</text><text class="cube-t" transform="translate(18 11) rotate(8)">Верх</text></svg>
      <div class="navbar">
        <button aria-label="Закрыть"><svg width="8" height="8" viewBox="0 0 8 8"><circle cx="4" cy="4" r="3.500" fill="#8fa9c0" stroke="#3c5a78"/><path d="M2 2l4 4M6 2L2 6" stroke="#2c4058"/></svg></button>
        <button class="n" aria-label="Штурвал"><svg width="24" height="24" viewBox="0 0 24 24"><path d="M12 1h11v11a11 11 0 1 1-11-11z" fill="#a9bcae" stroke="#d5e0e6"/><circle cx="12" cy="12" r="8" fill="#dfe8e4" stroke="#8ab08a"/><circle cx="12" cy="12" r="5" fill="#c4d0d8" stroke="#8ba0ac"/><path d="M9 10h6v4H9z" fill="#eef2f4"/></svg></button><i class="dd"></i>
        <hr>
        <button class="n" aria-label="Панорама"><svg width="18" height="18" viewBox="0 0 18 18"><path d="M6 9V3M9 8V1M12 8V2M15 9V4M5 11L2 8" stroke="#e6edf2" stroke-width="2"/><path d="M5 8h11v4l-3 5H8z" fill="#e6edf2"/><path d="M7 4v5M10 3v5M13 4v5" stroke="#536a80"/></svg></button>
        <button class="n" aria-label="Зумирование"><svg width="18" height="18"><use href="#mag"/></svg></button><i class="dd"></i>
        <button class="n" aria-label="Орбита"><svg width="18" height="18" viewBox="0 0 18 18"><ellipse cx="9" cy="9" rx="7" ry="3" fill="none" stroke="#8d84ac"/><ellipse cx="9" cy="9" rx="4" ry="7" fill="none" stroke="#4f6c8c"/><path d="M8 6l5 3-5 4z" fill="#a8688c"/></svg></button><i class="dd"></i>
        <button class="n" aria-label="Вид на грань"><svg width="18" height="16" viewBox="0 0 18 16"><path d="M2 6h14v8H2z" fill="#c8cc6c" stroke="#4e5d50"/><path d="M5 8h8v4H5z" fill="#8498a4" stroke="#4e5d50"/><path d="M3 5l9-3M9 4l5-3" stroke="#44586a"/></svg></button>
        <button class="n" aria-label="Предыдущий вид"><svg width="18" height="18"><use href="#mag"/></svg></button>
        <button class="n" aria-label="Стиль"><svg width="18" height="18" viewBox="0 0 18 18"><path d="M2 6l4-4h10v8l-4 5H2z" fill="#d2cc50" stroke="#5e6a3c"/><path d="M2 6h10v9M12 6l4-4M2 10h5v5" fill="none" stroke="#5e6a3c"/></svg></button><i class="dd"></i>
        <button class="n" aria-label="Сечение"><svg width="18" height="18" viewBox="0 0 18 18"><path d="M5 8l5-3 6 2-1 8-5 2-5-4z" fill="#d0c950"/><circle cx="5" cy="5" r="4" fill="#b8cfe0"/><path d="M12 3l3 4-5 3z" fill="#e6e080"/></svg></button><i class="dd"></i>
        <button aria-label="Настройка"><svg width="8" height="8" viewBox="0 0 8 8"><circle cx="4" cy="4" r="3.500" fill="#8fa9c0" stroke="#3c5a78"/><path d="M2 4h4" stroke="#2c4058"/></svg></button>
      </div>
    </div>
    <div class="docs">
      <button class="tile" aria-label="Каскадом"><svg width="16" height="16" viewBox="0 0 16 16"><path d="M1.500 9.500v-8h9v2M3.500 12.500v-8h9v2M5.500 6.500h9v8h-9zM5.500 8.500h9" fill="none" stroke="#222"/></svg></button>
      <button class="tile" aria-label="Мозаикой"><svg width="16" height="16" viewBox="0 0 16 16"><path d="M1.500 2.500h5v4h-5zM9.500 2.500h5v4h-5zM1.500 9.500h5v4h-5zM9.500 9.500h5v4h-5z" fill="none" stroke="#222"/></svg></button>
      <button class="tile up" aria-label="Список"><svg width="16" height="16" viewBox="0 0 16 16"><path d="M4 7l4-4 4 4z" fill="#333"/></svg></button>
      <a href="#" class="doc on">Stalciaus deze lam.iam<svg width="8" height="8" viewBox="0 0 8 8"><path d="M.5.5h7v7h-7z" fill="#eee" stroke="#888"/><path d="M2 2l4 4M6 2L2 6" stroke="#333"/></svg></a>
      <a href="#" class="doc">Stalciaus deze lam.idw</a>
    </div>
  </section>
</main>

<div class="status"><span class="msg">Для вызова справки нажмите F1</span><span class="num">7</span><span class="num">9</span></div>

<footer class="taskbar">
  <button class="start"><svg width="18" height="18" viewBox="0 0 18 18"><path d="M2 4c2-2 4-2 6 0L7 9C5 7 3 7 1 9z" fill="#e4502c"/><path d="M9 4c2 2 4 2 7 0l-1 5c-3 2-5 2-7 0z" fill="#6db33c"/><path d="M1 10c2-2 4-2 6 0l-1 5c-2-2-4-2-6 0z" fill="#2f74c8"/><path d="M8 10c2 2 4 2 7 0l-1 5c-3 2-5 2-7 0z" fill="#f4c02c"/></svg>Start</button>
  <button class="task framed ie" aria-label="Internet Explorer"><svg width="34" height="34" viewBox="0 0 34 34"><path d="M29 19H12c0 6 8 8 11 3h6C24 33 6 31 6 17 6 3 29 2 29 19zM12 15h11c0-6-10-6-11 0z" fill="#3fa8e4" stroke="#1878b8"/><path d="M30 9c2-10-14-5-23 9-6 8-6 14 3 11" fill="none" stroke="#f2bd2c" stroke-width="2"/></svg></button>
  <button class="task framed stack" aria-label="Проводник"><svg width="34" height="34" viewBox="0 0 34 34"><path d="M2 6h8l2 3h20v21H2z" fill="#f0d478" stroke="#a8842c"/><path d="M4 11h27v18H4z" fill="#fae9a4"/><path d="M4 7h5M13 8h5" stroke="#2a7a3a" stroke-width="2"/><path d="M20 8h6" stroke="#c84030" stroke-width="2"/><path d="M6 33V23h22v10h-6v-5H12v5z" fill="#8cc4e8" stroke="#4a88b4"/></svg></button>
  <button class="task" aria-label="Калькулятор"><svg width="34" height="34" viewBox="0 0 34 34"><path d="M6 2h21v29H6z" fill="#9cc8ec" stroke="#5888b4"/><path d="M8 4h17v8H8z" fill="#e8f2fa" stroke="#7aa4c8"/><path d="M20 6h3v4h-3z" fill="none" stroke="#334"/><path d="M9 16h15M9 20h15M9 24h15M9 28h15" stroke="#fff" stroke-width="3" stroke-dasharray="2 1"/></svg></button>
  <button class="task" aria-label="Проигрыватель"><svg width="34" height="34" viewBox="0 0 34 34"><path d="M12 5h17v20H12z" fill="#7db8e0" stroke="#4a88b4"/><path d="M4 6h20v24H4z" fill="#b8dcf4" stroke="#5a98c4"/><circle cx="14" cy="18" r="8" fill="#f0822c" stroke="#c85c10"/><path d="M11 13v10l8-5z" fill="#fff"/></svg></button>
  <button class="task" aria-label="Firefox"><svg width="34" height="34" viewBox="0 0 34 34"><circle cx="17" cy="17" r="14" fill="#25528f"/><path d="M12 5c6-4 13-2 15 3-5-2-8 0-9 2z" fill="#4a90d0"/><path d="M4 8c2 1 3 1 5 0l3 2 6 1-4 4c0 4 4 6 8 4 3-2 3-5 1-8 4 2 6 6 3 10 4-3 5-9 3-13 6 9 2 23-11 24C5 33-1 20 4 8z" fill="#e8701c"/><path d="M27 8c6 9 1 19-6 22 5-5 8-12 6-22z" fill="#f8b42c"/></svg></button>
  <button class="task current" aria-label="Autodesk Inventor"><svg width="34" height="34" viewBox="0 0 34 34"><path d="M1 1h32v32H1z" fill="#111"/><path d="M1 1h6l-6 8zM18 3c7-3 8 6 15 3v3c-7 2-11-5-15-3zM21 12c6-2 6 6 12 4v3c-6 1-8-4-12-4z" fill="#aaa"/><path d="M5 4h12v4h-3l3 16h5v4H8v-4h4L9 8H5z" fill="#e4e4e4" stroke="#888"/><path d="M1 27l6-3h26v9H1z" fill="#efa42c"/><text x="16" y="32" class="pro">PRO</text></svg></button>
  <button class="task framed red" aria-label="IrfanView"><svg width="34" height="34" viewBox="0 0 34 34"><path d="M8 4l2-2 4 3 5-1 3-3 2 1-2 5-2 5 4 2 6-1 1 2-4 2v3l-4 0-1 4 5 2 0 3-5 0-5-4-2 5 0 4h-4l0-5 1-5-3-3-7 2-1-3 5-3 4 0-1-4-2-2z" fill="#f01414"/><path d="M9 7l5 3M16 9l4-2" stroke="#300" stroke-width="3"/><path d="M24 27c4 1 6 1 7-2" fill="none" stroke="#f01414" stroke-width="2"/></svg></button>
  <span class="lang">EN</span>
  <div class="tray">
    <svg width="8" height="12" viewBox="0 0 8 12"><path d="M1 5l3-3 3 3M1 10l3-3 3 3" fill="none" stroke="#000" stroke-width="1.500"/></svg>
    <svg width="18" height="18" viewBox="0 0 18 18"><path d="M2 4h8v12H2zM4 2h4v2H4z" fill="#fff" stroke="#555"/><path d="M8 6h8v3c0 2-2 3-4 3v4M10 3v3M14 3v3" fill="#fff" stroke="#444"/></svg>
    <svg width="18" height="18" viewBox="0 0 18 18"><path d="M2 7h3l5-5v14l-5-5H2z" fill="#fff" stroke="#777"/><circle cx="12" cy="12" r="4" fill="#f6dcdc" stroke="#d01c24" stroke-width="2"/><path d="M9 9l6 6" stroke="#d01c24" stroke-width="2"/></svg>
    <svg width="18" height="18" viewBox="0 0 18 18"><path d="M1.500 12.500h2v3h-2zM4.500 10.500h2v5h-2zM7.500 8.500h2v7h-2zM10.500 6.500h2v9h-2zM13.500 3.500h2v12h-2z" fill="#fff" stroke="#777"/></svg>
    <svg width="18" height="18" viewBox="0 0 18 18"><path d="M3 2v15" stroke="#666" stroke-width="2"/><path d="M4 3h6v2h6l-2 3 2 3H9V9H4z" fill="#fff" stroke="#777"/></svg>
    <time><span>20:44</span><span>2016.11.26</span></time>
    <svg width="16" height="16" viewBox="0 0 16 16"><path d="M1 2h15v10H1z" fill="#2c68c8" stroke="#c8d4e4"/><path d="M2 3h14L4 8z" fill="#7cb0f0"/><path d="M5 13h11v2H5z" fill="#445"/></svg>
  </div>
</footer>
</body>
</html>
```
FILE: styles.css
```css
* { box-sizing: border-box; }
html { height: 100%; }
body {
  margin: 0;
  min-height: 100%;
  display: flex;
  flex-direction: column;
  background: #d4d0c8;
  color: #111;
  font: 11px/14px "DejaVu Sans Condensed", "Noto Sans", sans-serif;
  overflow: hidden;
}
button { font: inherit; color: inherit; background: none; border: 0; padding: 0; }
a { color: inherit; text-decoration: none; }
svg { display: block; flex: none; }
.defs { position: absolute; }
.grow { flex: 1; }

/* small drop-down marks */
.dd { flex: none; width: 12px; display: flex; justify-content: center; }
.dd::after { content: ""; border: 2px solid transparent; border-top: 3px solid #3c3c3c; border-bottom: 0; }
.tri, .arrow { display: inline-block; border: 4px solid transparent; border-top: 5px solid #333; border-bottom: 0; margin-left: 4px; }
.tri { vertical-align: middle; }
.tri.white { border-top-color: #fff; }
.arrow { border-width: 3px 3px 0; border-top-color: #111; margin: 0 6px 0 8px; }

/* title bar and ribbon tabs */
.top { display: flex; height: 42px; background: #404040; color: #fff; }
.app { position: relative; width: 41px; border: 1px solid #333; background: linear-gradient(#9c9c9c, #777 50%, #8e8e8e); overflow: hidden; }
.app span { position: absolute; right: 2px; bottom: 0; font-size: 9px; line-height: 11px; font-weight: bold; color: #222; }
.bars { flex: 1; min-width: 0; display: flex; flex-direction: column; }
.title { display: flex; align-items: center; height: 23px; padding-left: 5px; background: linear-gradient(#8c8c8c, #686868); }
.tb { flex: none; width: 24px; height: 22px; display: flex; align-items: center; justify-content: center; }
.tb.narrow { width: 16px; }
.tb.fx { font: 16px/20px "Liberation Serif", serif; color: #111; }
.fx sub { font-size: 11px; line-height: 0; }
.sep { flex: none; width: 2px; height: 18px; margin: 0 2px; border-left: 1px solid #5a5a5a; border-right: 1px solid #8e8e8e; }
.sep.wide { margin: 0 4px; }
.combo {
  flex: none; width: 100px; height: 19px; padding: 0 16px 0 4px;
  appearance: none; border: 0; border-radius: 0;
  font: italic 11px/19px "DejaVu Sans Condensed", "Noto Sans", sans-serif; color: #777;
  background: linear-gradient(#444, #444) no-repeat right 3px top 8px / 7px 1px,
              linear-gradient(#444, #444) no-repeat right 4px top 9px / 5px 1px,
              linear-gradient(#444, #444) no-repeat right 5px top 10px / 3px 1px,
              linear-gradient(#444, #444) no-repeat right 6px top 11px / 1px 1px, #c9c9c9;
}
.docname { flex: none; width: 142px; text-align: center; white-space: nowrap; }
.search { flex: none; width: 180px; height: 20px; padding: 0 4px; border: 1px solid #888; background: #f6f6f6; font: italic 11px/18px "DejaVu Sans Condensed", "Noto Sans", sans-serif; }
.search::placeholder { color: #777; opacity: 1; }
.win { display: flex; gap: 4px; margin-left: 20px; }
.tabs { flex: 1; display: flex; align-items: stretch; }
.tabs a { padding: 2px 9px 0 10px; white-space: nowrap; }
.tabs .on { margin-top: 2px; padding-top: 0; background: linear-gradient(#d4d4d4, #fff); color: #222; border-radius: 2px 2px 0 0; }
.fold { margin-left: 24px; }

/* ribbon */
.ribbon { display: flex; height: 95px; background: linear-gradient(#8c8c8c, #b4b4b4); border-bottom: 1px solid #666; }
.panel { flex: none; display: flex; flex-direction: column; background: #fff; border-right: 1px solid #a8a8a8; }
.panel h2 { margin: 0 1px; height: 17px; font: inherit; line-height: 15px; text-align: center; white-space: nowrap; background: #ebebeb; color: #333; }
.body { flex: 1; display: flex; padding: 4px 6px 0; gap: 6px; }
.body.center { justify-content: center; }
.big { flex: none; display: flex; flex-direction: column; align-items: center; padding-top: 2px; white-space: nowrap; }
.big svg, .bigfx { margin-bottom: 3px; }
.big span:last-child { line-height: 13px; }
.off { color: #b4b4b4; }
.off .dd { margin-top: 2px; }
.off .dd::after { border-top-color: #999; }
.bigfx { height: 32px; font: 34px/32px "Liberation Serif", serif; color: #333; }
.bigfx sub { font-size: 24px; line-height: 0; vertical-align: -2px; }
.col { display: flex; flex-direction: column; padding-top: 1px; }
.row { display: flex; align-items: center; gap: 4px; height: 24px; white-space: nowrap; }
.boxes { flex: none; display: flex; flex-direction: column; gap: 2px; }
.box { width: 24px; height: 22px; display: flex; align-items: center; justify-content: center; background: #f2f2f2; border: 1px solid #c8c8c8; }
.box.active { background: #cfe8f8; border-color: #3c8cc0; }
.box.slim { width: 12px; border-left: 0; }
.split { display: flex; width: 24px; }
.split .box { flex: none; }
.p-upd { width: 212px; }
.p-upd .body { gap: 16px; padding-left: 12px; }
.p-par { width: 82px; }
.p-sty { width: 184px; }
.p-sty .body, .p-cld .body { padding-left: 4px; }
.p-sty .body { gap: 8px; }
.p-ins { width: 83px; }
.p-cld { width: 217px; }
.p-dev { width: 203px; }
.p-dev .body { padding-left: 4px; gap: 2px; }
.p-dev .boxes + .boxes { margin-left: 10px; }
.p-log { width: 131px; }
.p-log .body, .p-lib .body { padding-left: 4px; gap: 4px; }
.p-lib { width: 140px; }
.p-lib .body { padding-left: 32px; }
.p-web { width: 73px; }
.ring-host { position: relative; }
.ring { position: absolute; left: -14px; top: -10px; }

/* model browser */
.work { flex: 1; display: flex; min-height: 0; }
.browser { flex: none; width: 390px; display: flex; flex-direction: column; padding: 4px 3px 29px; border-right: 2px solid #f4f2ec; border-bottom: 1px solid #fff; }
.grip { display: flex; align-items: center; gap: 5px; height: 12px; }
.grip i { flex: 1; height: 6px; border: 1px solid #808080; border-width: 1px 1px 1px 0; background: #eee; }
.caption { display: flex; align-items: center; height: 21px; padding: 0 4px 0 8px; background: #808080; color: #fff; font-size: 13px; font-weight: bold; }
.help { margin-left: auto; }
.tools { display: flex; align-items: center; height: 27px; padding: 0 2px 2px; }
.vsep { width: 2px; height: 18px; margin: 0 6px 0 7px; border-left: 1px solid #888; border-right: 1px solid #fff; }
.view { display: flex; align-items: center; gap: 3px; white-space: nowrap; }
.tree { flex: 1; list-style: none; margin: 0; padding: 0 5px; background: #fff; border: 1px solid #000; }
.tree li { position: relative; display: flex; align-items: center; gap: 2px; height: 18px; padding-left: 19px; white-space: nowrap; }
.tree li::before { content: ""; position: absolute; left: 4px; top: 0; width: 10px; height: 100%; border-left: 1px solid #98a0b8; background: linear-gradient(#98a0b8, #98a0b8) no-repeat 0 9px / 10px 1px; }
.tree .root { padding-left: 0; gap: 3px; font-weight: bold; }
.tree .root::before { display: none; }
.tree .last::before { height: 10px; }
.tree b { position: absolute; left: 0; top: 5px; width: 9px; height: 9px; border: 1px solid #7c88a0; background: linear-gradient(#000, #000) no-repeat center / 5px 1px, linear-gradient(#000, #000) no-repeat center / 1px 5px, #fff; }

/* graphics area */
.stage { flex: 1; min-width: 0; display: flex; flex-direction: column; }
.view3d { position: relative; flex: 1; background: #336496; border-left: 1px solid #444; overflow: hidden; }
.scene { position: absolute; inset: 0; width: 100%; height: 100%; }
.mark, .mark-lat { fill: #d8ecff; fill-opacity: .8; }
.mark { font: 300 50px "Noto Sans CJK SC", sans-serif; }
.mark-lat { font: 44px "Liberation Serif", serif; }
.axis { font: 12px "DejaVu Sans Condensed", sans-serif; }
.docwin { position: absolute; top: 7px; right: 0; display: flex; gap: 8px; }
.viewcube { position: absolute; top: 45px; right: 17px; }
.cube-t { font: 9px "DejaVu Sans Condensed", sans-serif; fill: #5b7591; }
.navbar { position: absolute; top: 117px; right: -2px; width: 36px; height: 290px; display: flex; flex-direction: column; align-items: center; justify-content: space-between; padding: 3px 0; background: #6b8fb2; border: 1px solid #2d4a6c; border-radius: 5px; }
.navbar > button:first-child, .navbar > button:last-child { align-self: flex-end; margin-right: 5px; }
.navbar hr { width: 100%; margin: 0; border: 0; border-top: 1px solid #42658a; }
.navbar .dd::after { border-top-color: #4a6680; border-width: 2px 2px 0; }

.docs { display: flex; height: 23px; border-top: 1px solid #fff; background: linear-gradient(#aaabae, #d8d8da); }
.tile { width: 20px; height: 20px; display: flex; align-items: center; justify-content: center; background: #d4d0c8; border: 1px solid #333; border-left-width: 0; }
.doc { display: flex; align-items: center; gap: 4px; height: 18px; padding: 0 8px 1px 6px; background: #d4d0c8; border: 1px solid #666; border-top: 0; border-radius: 0 0 6px 6px; white-space: nowrap; }
.doc.on { background: #fff; }

/* status line */
.status { display: flex; height: 24px; padding-top: 1px; border-top: 1px solid #fff; border-bottom: 1px solid #fff; }
.status span { padding: 3px 0 0; border: 1px solid #808080; border-right-color: #fff; border-bottom: 0; }
.msg { flex: 1; margin-right: 4px; }
.status .num { width: 36px; margin-right: 2px; padding-left: 4px; }
.status .num:last-child { width: 32px; margin-right: 0; }

/* taskbar */
.taskbar { display: flex; height: 39px; padding-top: 3px; border-top: 1px solid #fff; overflow: hidden; }
.start { width: 52px; margin: 0 9px 0 2px; display: flex; align-items: center; justify-content: center; font-weight: bold; border: 1px solid #fff; border-width: 1px 0 0 1px; box-shadow: 2px 0 0 #444; }
.task { flex: none; width: 50px; display: flex; justify-content: center; border: 1px solid transparent; border-bottom: 0; }
.framed { width: 48px; border-color: #fff #404040 #fff #fff; box-shadow: 1px 0 0 #808080; margin-right: 2px; }
.framed.red { width: 46px; margin-left: 2px; }
.stack { width: 44px; box-shadow: 2px 0 0 #d4d0c8, 3px 0 0 #404040; margin-right: 6px; }
.current { width: 48px; background: #fff; border-color: #404040 #fff #fff #404040; }
.pro { font: bold 7px "DejaVu Sans Condensed", sans-serif; fill: #fff; }
.lang { margin-left: auto; padding: 11px 2px 0 0; }
.tray { display: flex; align-items: center; gap: 7px; margin-left: 5px; padding-left: 6px; border: 1px solid #808080; border-width: 1px 0 0 1px; box-shadow: -4px 0 0 -1px #d4d0c8, -5px 0 0 -1px #fff; }
.tray time { display: flex; flex-direction: column; align-items: center; margin-left: 6px; line-height: 16px; }
```
